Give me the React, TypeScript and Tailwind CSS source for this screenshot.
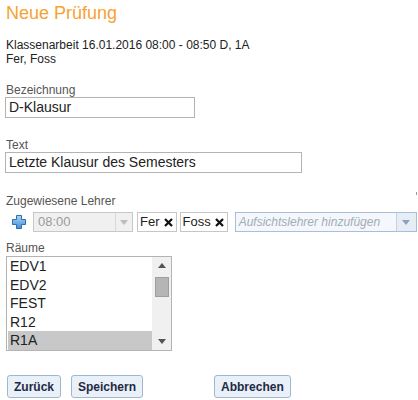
const ROOMS = ["EDV1", "EDV2", "FEST", "R12", "R1A"];
const SELECTED_ROOM = "R1A";

function PlusIcon() {
  return (
    <svg width="14" height="14" viewBox="0 0 14 14" className="shrink-0">
      <defs>
        <linearGradient id="plusFill" x1="0" y1="0" x2="0" y2="1">
          <stop offset="0" stopColor="#a9d4f5" />
          <stop offset="1" stopColor="#3f8fd6" />
        </linearGradient>
      </defs>
      <path
        d="M4.5 0.5h5v4h4v5h-4v4h-5v-4h-4v-5h4z"
        fill="url(#plusFill)"
        stroke="#2f6fb0"
        strokeWidth="1"
        strokeLinejoin="round"
      />
    </svg>
  );
}

function Cross() {
  return (
    <svg width="9" height="9" viewBox="0 0 9 9" className="shrink-0">
      <path d="M1 1L8 8M8 1L1 8" stroke="#111" strokeWidth="2.2" />
    </svg>
  );
}

function Caret({ color, up }: { color: string; up?: boolean }) {
  return (
    <svg width="8" height="5" viewBox="0 0 8 5">
      <path d={up ? "M0 5L4 0L8 5z" : "M0 0L8 0L4 5z"} fill={color} />
    </svg>
  );
}

function Chip({ label }: { label: string }) {
  return (
    <div className="flex h-[20px] shrink-0 items-center gap-[4px] border border-[#c6c6c6] bg-white pl-[2px] pr-[3px] text-[13px] text-[#222]">
      <span>{label}</span>
      <Cross />
    </div>
  );
}

function Field({ label, value, width, className = "" }: { label: string; value: string; width: string; className?: string }) {
  return (
    <div className={className}>
      <div className="text-[12px] leading-[14px] text-[#555]">{label}</div>
      <div
        className={`-ml-px flex h-[21px] items-center border border-[#b4b4b4] bg-white pl-[3px] text-[14px] text-[#222] ${width}`}
      >
        {value}
      </div>
    </div>
  );
}

export default function App() {
  return (
    <div className="relative min-h-[400px] w-[418px] bg-white px-[6px] pt-[2px] font-['Liberation_Sans',Arial,sans-serif] text-[#333]">
      <span className="absolute right-px top-[192px] h-[3px] w-px bg-[#999]" />

      <h1 className="text-[18px] leading-[22px] text-[#f7a233]">Neue Prüfung</h1>

      <div className="mt-[14px] text-[12px] leading-[14px] text-[#222]">
        <p>Klassenarbeit 16.01.2016 08:00 - 08:50 D, 1A</p>
        <p>Fer, Foss</p>
      </div>

      <Field label="Bezeichnung" value="D-Klausur" width="w-[190px]" className="mt-[17px]" />
      <Field label="Text" value="Letzte Klausur des Semesters" width="w-[297px]" className="mt-[20px]" />

      <div className="mt-[21px] text-[12px] leading-[14px] text-[#555]">Zugewiesene Lehrer</div>
      <div className="mt-[4px] flex h-[20px] items-center">
        <div className="ml-[6px]">
          <PlusIcon />
        </div>
        <div className="ml-[7px] flex h-[20px] w-[100px] shrink-0 items-stretch border border-[#c8c8c8] bg-[#f0f0f0]">
          <div className="flex flex-1 items-center pl-[4px] text-[13px] text-[#9a9a9a]">08:00</div>
          <div className="flex w-[17px] items-center justify-center border-l border-[#d8d8d8]">
            <Caret color="#bdbdbd" />
          </div>
        </div>
        <div className="ml-[4px] flex gap-[3px]">
          <Chip label="Fer" />
          <Chip label="Foss" />
        </div>
        <div className="ml-[7px] flex h-[20px] w-[182px] shrink-0 items-stretch border border-[#a9bfd9] bg-[#f4f7fb]">
          <div className="flex flex-1 items-center overflow-hidden whitespace-nowrap pl-[3px] text-[12px] italic text-[#a3acba]">
            Aufsichtslehrer hinzufügen
          </div>
          <div className="flex w-[20px] items-center justify-center border-l border-[#c4d3e4] bg-[#e7edf4]">
            <Caret color="#8aa1bd" />
          </div>
        </div>
      </div>

      <div className="mt-[9px] text-[12px] leading-[14px] text-[#555]">Räume</div>
      <div className="mt-px flex h-[95px] w-[166px] border border-[#b4b4b4] bg-white">
        <ul className="flex-1 pl-px">
          {ROOMS.map((room) => (
            <li
              key={room}
              className={`h-[18.5px] pl-[2px] text-[14px] leading-[18.5px] text-[#222] ${
                room === SELECTED_ROOM ? "bg-[#c8c8c8]" : ""
              }`}
            >
              {room}
            </li>
          ))}
        </ul>
        <div className="flex w-[19px] flex-col items-center bg-[#f0f0f0]">
          <div className="flex h-[17px] items-center justify-center">
            <Caret color="#555" up />
          </div>
          <div className="mt-[3px] h-[20px] w-[14px] border border-[#9e9e9e] bg-[#b5b5b5]" />
          <div className="flex-1" />
          <div className="flex h-[17px] items-center justify-center">
            <Caret color="#555" />
          </div>
        </div>
      </div>

      <div className="mt-[24px] flex items-center">
        <button className="ml-px h-[23px] rounded-[3px] border border-[#9fb7d2] bg-[#e9f0f8] px-[6px] text-[12px] font-bold text-[#1e2a44]">
          Zurück
        </button>
        <button className="ml-[10px] h-[23px] rounded-[3px] border border-[#9fb7d2] bg-[#e9f0f8] px-[6px] text-[12px] font-bold text-[#1e2a44]">
          Speichern
        </button>
        <button className="ml-[71px] h-[23px] rounded-[3px] border border-[#9fb7d2] bg-[#e9f0f8] px-[6px] text-[12px] font-bold text-[#1e2a44]">
          Abbrechen
        </button>
      </div>
    </div>
  );
}
